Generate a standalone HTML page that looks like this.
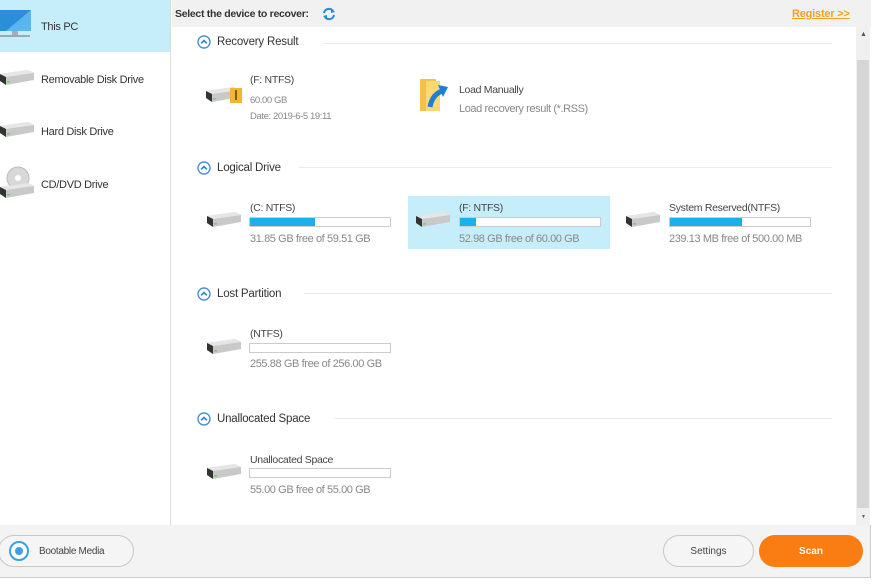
<!DOCTYPE html>
<html><head><meta charset="utf-8"><style>
*{margin:0;padding:0;box-sizing:border-box}
body{width:876px;height:588px;background:#fff;font-family:"Liberation Sans",sans-serif;position:relative;overflow:hidden;color:#333}
.a{position:absolute}
.side{left:0;top:0;width:171px;height:525px;background:#fff;border-right:1px solid #ddd}
.sel{left:0;top:0;width:170px;height:52px;background:#c6eefa}
.st{font-size:11px;color:#333;letter-spacing:-0.3px}
.top{left:172px;top:0;width:699px;height:27px;background:#f1f1f1}
.main{left:175px;top:27px;width:681px;height:498px;background:#fff}
.sb{left:856px;top:27px;width:14px;height:498px;background:#f0f0f0}
.thumb{left:857px;top:60px;width:12px;height:448px;background:#d6d6d6}
.bottom{left:0;top:525px;width:871px;height:53px;background:#f3f3f3;border-bottom:1px solid #ccc;border-right:1px solid #ccc}
.hdr{font-size:11.5px;color:#333;letter-spacing:-0.2px}
.line{height:1px;background:#ececec}
.t1{font-size:10.5px;color:#444;letter-spacing:-0.3px}
.t2{font-size:11px;color:#888;letter-spacing:-0.4px}
.bar{width:142px;height:10px;border:1px solid #ccc;background:#fff}
.bar i{display:block;height:8px;background:#1ab0e8}
.btn{border:1px solid #c8c8c8;border-radius:16px;background:#f5f5f5;font-size:10px;color:#444;text-align:center}
</style></head><body>
<div class="a side"></div>
<div class="a sel"></div>
<svg class="a" style="left:0;top:8px" width="34" height="34"><rect x="0" y="2" width="31" height="21" fill="#2a8fd8"/><polygon points="6,23 31,2 31,23" fill="#5bb6f0"/><rect x="12" y="23" width="6" height="4" fill="#aab"/><rect x="0" y="27" width="30" height="2" fill="#9aa"/></svg>
<div class="a st" style="left:41px;top:21px">This PC</div>

<svg width="0" height="0" style="position:absolute"><defs>
<g id="drv"><polygon points="2,6 30,2 36,5 36,12 8,17 2,13" fill="#c9c9c9"/><polygon points="2,6 30,2 36,5 8,9" fill="#e6e6e6"/><polygon points="2,6 8,9 8,17 2,13" fill="#333"/><rect x="9" y="13" width="3" height="1.5" fill="#7c7"/></g>
<g id="chev"><circle cx="7" cy="7" r="6" fill="#fff" stroke="#4a90d9" stroke-width="1.4"/><path d="M4.2 8.3 L7 5.5 L9.8 8.3" stroke="#2f7fd0" stroke-width="1.6" fill="none"/></g>
</defs></svg>
<svg class="a" style="left:0;top:68px" width="38" height="20"><use href="#drv" transform="translate(-2,0)"/></svg>
<div class="a st" style="left:41px;top:74px">Removable Disk Drive</div>
<svg class="a" style="left:0;top:120px" width="38" height="20"><use href="#drv" transform="translate(-2,0)"/></svg>
<div class="a st" style="left:41px;top:126px">Hard Disk Drive</div>
<svg class="a" style="left:0;top:166px" width="38" height="34"><circle cx="18" cy="12" r="11" fill="#d8d8d8" stroke="#bbb"/><circle cx="18" cy="12" r="3" fill="#fff"/><use href="#drv" transform="translate(-2,15)"/></svg>
<div class="a st" style="left:41px;top:179px">CD/DVD Drive</div>

<div class="a top"></div>
<div class="a" style="left:175px;top:8px;font-size:10.5px;font-weight:bold;color:#333;letter-spacing:-0.3px">Select the device to recover:</div>
<svg class="a" style="left:322px;top:7px" width="14" height="14"><path d="M2 6 A5 5 0 0 1 11 4 M12 8 A5 5 0 0 1 3 10" stroke="#1e8ee0" stroke-width="2" fill="none"/><polygon points="9,1 13,5 9,6" fill="#1e8ee0"/><polygon points="5,13 1,9 5,8" fill="#1e8ee0"/></svg>
<div class="a" style="left:792px;top:8px;font-size:11px;font-weight:bold;color:#f5a020;text-decoration:underline;letter-spacing:-0.2px">Register &gt;&gt;</div>

<div class="a main"></div>
<div class="a sb"></div>
<div class="a thumb"></div>
<div class="a" style="left:860px;top:31px;font-size:7px;color:#555">▲</div>
<div class="a" style="left:861px;top:514px;font-size:5px;color:#555">▼</div>

<svg class="a" style="left:197px;top:35px" width="14" height="14"><use href="#chev"/></svg>
<div class="a hdr" style="left:217px;top:36px">Recovery Result</div>
<div class="a line" style="left:322px;top:43px;width:510px"></div>
<svg class="a" style="left:204px;top:85px" width="44" height="22"><use href="#drv"/><rect x="26" y="3" width="12" height="15" fill="#f2b636"/><rect x="31" y="5" width="2" height="10" fill="#8a5a00"/></svg>
<div class="a t1" style="left:250px;top:74px">(F: NTFS)</div>
<div class="a t2" style="left:250px;top:95px;font-size:9.5px">60.00 GB</div>
<div class="a t2" style="left:250px;top:111px;font-size:9.5px">Date: 2019-6-5 19:11</div>
<svg class="a" style="left:418px;top:77px" width="32" height="36"><rect x="2" y="2" width="16" height="32" fill="#f3c14a"/><rect x="8" y="4" width="14" height="30" fill="#fbd873"/><path d="M12 30 Q14 18 24 14" stroke="#1e7fd6" stroke-width="5" fill="none"/><polygon points="20,8 30,10 25,20" fill="#1e7fd6"/></svg>
<div class="a t1" style="left:459px;top:84px">Load Manually</div>
<div class="a t2" style="left:459px;top:103px">Load recovery result (*.RSS)</div>

<svg class="a" style="left:197px;top:161px" width="14" height="14"><use href="#chev"/></svg>
<div class="a hdr" style="left:217px;top:162px">Logical Drive</div>
<div class="a line" style="left:298px;top:167px;width:534px"></div>
<svg class="a" style="left:205px;top:210px" width="40" height="20"><use href="#drv"/></svg>
<div class="a t1" style="left:250px;top:202px">(C: NTFS)</div>
<div class="a bar" style="left:249px;top:217px"><i style="width:65px"></i></div>
<div class="a t2" style="left:250px;top:233px">31.85 GB free of 59.51 GB</div>
<div class="a" style="left:408px;top:196px;width:202px;height:53px;background:#c6eefa"></div>
<svg class="a" style="left:414px;top:210px" width="40" height="20"><use href="#drv"/></svg>
<div class="a t1" style="left:459px;top:202px">(F: NTFS)</div>
<div class="a bar" style="left:459px;top:217px"><i style="width:16px"></i></div>
<div class="a t2" style="left:459px;top:233px">52.98 GB free of 60.00 GB</div>
<svg class="a" style="left:624px;top:210px" width="40" height="20"><use href="#drv"/></svg>
<div class="a t1" style="left:669px;top:202px">System Reserved(NTFS)</div>
<div class="a bar" style="left:669px;top:217px"><i style="width:72px"></i></div>
<div class="a t2" style="left:669px;top:233px">239.13 MB free of 500.00 MB</div>

<svg class="a" style="left:197px;top:287px" width="14" height="14"><use href="#chev"/></svg>
<div class="a hdr" style="left:217px;top:288px">Lost Partition</div>
<div class="a line" style="left:304px;top:293px;width:528px"></div>
<svg class="a" style="left:205px;top:337px" width="40" height="20"><use href="#drv"/></svg>
<div class="a t1" style="left:250px;top:328px">(NTFS)</div>
<div class="a bar" style="left:249px;top:343px"></div>
<div class="a t2" style="left:250px;top:358px">255.88 GB free of 256.00 GB</div>

<svg class="a" style="left:197px;top:412px" width="14" height="14"><use href="#chev"/></svg>
<div class="a hdr" style="left:217px;top:413px">Unallocated Space</div>
<div class="a line" style="left:334px;top:418px;width:498px"></div>
<svg class="a" style="left:205px;top:462px" width="40" height="20"><use href="#drv"/></svg>
<div class="a t1" style="left:250px;top:454px">Unallocated Space</div>
<div class="a bar" style="left:249px;top:468px"></div>
<div class="a t2" style="left:250px;top:484px">55.00 GB free of 55.00 GB</div>

<div class="a bottom"></div>
<div class="a btn" style="left:-2px;top:535px;width:136px;height:32px"></div>
<div class="a" style="left:9px;top:541px;width:20px;height:20px;border:2px solid #3aa0e8;border-radius:50%;background:#fff"></div>
<div class="a" style="left:15px;top:547px;width:8px;height:8px;border-radius:50%;background:#3aa0e8"></div>
<div class="a" style="left:39px;top:546px;font-size:10px;color:#444;letter-spacing:-0.3px">Bootable Media</div>
<div class="a btn" style="left:663px;top:535px;width:91px;height:32px;line-height:32px">Settings</div>
<div class="a" style="left:759px;top:535px;width:104px;height:32px;border-radius:16px;background:#fa7d14;color:#fff;font-size:10px;font-weight:bold;text-align:center;line-height:34px">Scan</div>
</body></html>
